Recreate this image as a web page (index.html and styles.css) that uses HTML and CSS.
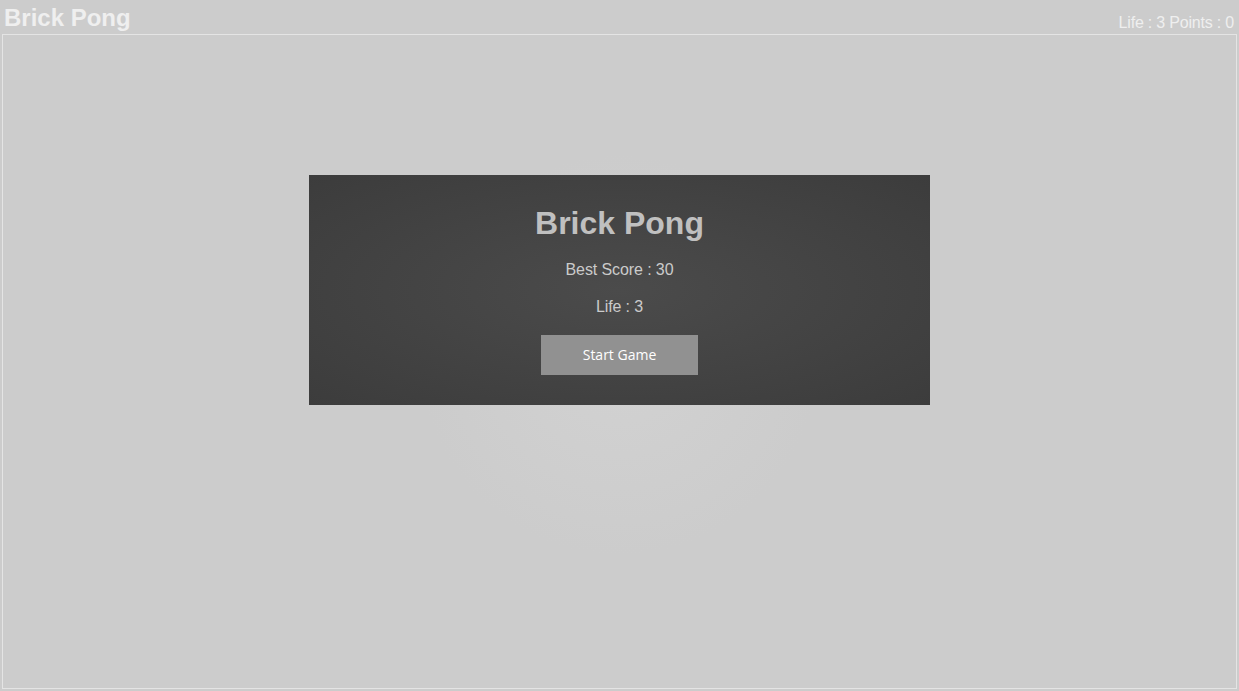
FILE: index.html
```html
<!DOCTYPE html>
<html lang="en">
<head>
<meta charset="utf-8">
<title>Brick Pong</title>
<link rel="stylesheet" href="styles.css">
</head>
<body>
<header class="topbar">
  <h1 class="brand">Brick Pong</h1>
  <div class="stats">Life : 3 Points : 0</div>
</header>
<main class="board">
  <section class="menu">
    <h2 class="menu-title">Brick Pong</h2>
    <p class="menu-line">Best Score : 30</p>
    <p class="menu-line">Life : 3</p>
    <button class="start-btn" type="button">Start Game</button>
  </section>
</main>
</body>
</html>
```
FILE: styles.css
```css
* { box-sizing: border-box; }
html, body {
  margin: 0;
  padding: 0;
  background: #cccccc;
  font-family: "Liberation Sans", Arial, sans-serif;
  overflow: hidden;
}
body { height: 691px; }
.topbar {
  height: 34px;
  display: flex;
  justify-content: space-between;
  align-items: flex-start;
  padding: 0 5px 0 4px;
}
.brand {
  margin: 4px 0 0;
  font-size: 24px;
  line-height: 27px;
  font-weight: bold;
  color: #efefef;
}
.stats {
  margin-top: 14px;
  font-size: 16px;
  line-height: 18px;
  letter-spacing: -0.2px;
  color: #efefef;
}
.board {
  margin: 0 2px;
  height: 655px;
  border: 1px solid #e4e4e4;
  background: radial-gradient(circle 200px at 50% 49%, #d2d2d2 0%, #cccccc 100%);
  padding-top: 140px;
}
.menu {
  width: 621px;
  margin: 0 auto;
  padding: 30px 0;
  display: flex;
  flex-direction: column;
  align-items: center;
  background: radial-gradient(ellipse at center, #4b4b4b 0%, #3c3c3c 100%);
}
.menu-title {
  margin: 0 0 20px;
  font-size: 32px;
  line-height: 36px;
  font-weight: bold;
  color: #c0c0c0;
}
.menu-line {
  margin: 0 0 19px;
  font-size: 16px;
  line-height: 18px;
  letter-spacing: -0.1px;
  color: #cbcbcb;
}
.start-btn {
  width: 157px;
  height: 40px;
  border: none;
  padding: 0 0 1px;
  background: #919191;
  color: #ffffff;
  font-family: "Open Sans", "DejaVu Sans", sans-serif;
  font-size: 14px;
  cursor: pointer;
}
```
